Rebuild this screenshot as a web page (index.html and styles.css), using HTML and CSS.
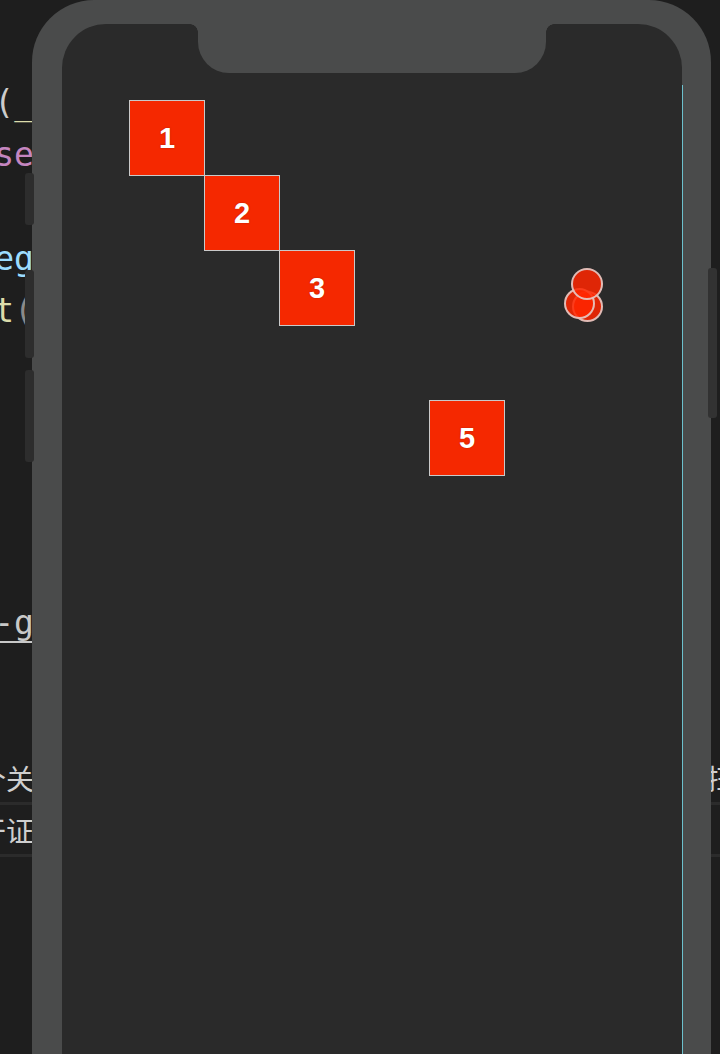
FILE: index.html
```html
<!DOCTYPE html>
<html lang="zh">
<head>
<meta charset="utf-8">
<title>Drag demo</title>
<link rel="stylesheet" href="styles.css">
</head>
<body>
<div class="editor">
  <div class="row"><span class="l"><span class="c-gray">(</span><span class="c-yel">_</span></span><span class="r"></span></div>
  <div class="row"><span class="l"><span class="c-pur">se</span></span><span class="r"></span></div>
  <div class="row"><span class="l"></span><span class="r"></span></div>
  <div class="row"><span class="l"><span class="c-blue">eg</span></span><span class="r"></span></div>
  <div class="row"><span class="l"><span class="c-yel">t</span><span class="c-dim">(</span></span><span class="r"></span></div>
  <div class="row"><span class="l"></span><span class="r"></span></div>
  <div class="row"><span class="l"></span><span class="r"></span></div>
  <div class="row"><span class="l"></span><span class="r"></span></div>
  <div class="row"><span class="l"></span><span class="r"></span></div>
  <div class="row"><span class="l"></span><span class="r"></span></div>
  <div class="row"><span class="l"><span class="c-link">-g</span></span><span class="r"></span></div>
  <div class="row"><span class="l"></span><span class="r"></span></div>
  <div class="row"><span class="l"></span><span class="r"></span></div>
  <div class="row sep"><span class="l cjk">个关</span><span class="r cjk">扫描</span></div>
  <div class="row sep"><span class="l cjk">干证</span><span class="r cjk"></span></div>
  <div class="row"><span class="l"></span><span class="r"></span></div>
</div>

<div class="phone">
  <div class="side-btn left-1"></div>
  <div class="side-btn left-2"></div>
  <div class="side-btn left-3"></div>
  <div class="side-btn right-1"></div>
  <div class="screen">
    <div class="notch"></div>
    <div class="box b1">1</div>
    <div class="box b2">2</div>
    <div class="box b3">3</div>
    <div class="box b5">5</div>
    <div class="dot d3"></div>
    <div class="dot d2"></div>
    <div class="dot d1"></div>
  </div>
</div>
</body>
</html>
```

FILE: styles.css
```css
html, body {
  margin: 0;
  padding: 0;
}
body {
  width: 720px;
  height: 1054px;
  overflow: hidden;
  background: #1e1e1e;
  position: relative;
  font-family: "DejaVu Sans Mono", "Noto Sans CJK SC", monospace;
}

/* ---------- editor behind the phone ---------- */
.editor {
  display: flex;
  flex-direction: column;
  padding-top: 77px;
}
.row {
  height: 52px;
  box-sizing: border-box;
  display: flex;
  justify-content: space-between;
  align-items: center;
  font-size: 33px;
  line-height: 52px;
  color: #c8c8c8;
}
.row.sep {
  border-bottom: 3px solid #2b2b2b;
}
.l {
  width: 34px;
  display: flex;
  justify-content: flex-end;
  white-space: nowrap;
}
.r {
  width: 14px;
  display: flex;
  justify-content: flex-start;
  white-space: nowrap;
}
.cjk {
  font-family: "Noto Sans CJK SC", sans-serif;
  font-size: 28px;
  color: #cfcfcf;
}
.c-gray { color: #cccccc; }
.c-dim { color: #8a8a8a; }
.c-yel { color: #dcdcaa; }
.c-pur { color: #c586c0; }
.c-blue { color: #9cdcfe; }
.c-link {
  color: #c8c8c8;
  text-decoration: underline;
  text-decoration-thickness: 2px;
  text-underline-offset: 7px;
}

/* ---------- phone ---------- */
.phone {
  position: absolute;
  left: 32px;
  top: 0;
  width: 679px;
  height: 1120px;
  box-sizing: border-box;
  padding: 24px 29px 0 30px;
  background: #4a4b4b;
  border-radius: 62px 62px 0 0;
  display: flex;
}
.side-btn {
  position: absolute;
  background: #2d2d2d;
  border-radius: 3px;
}
.left-1 { left: -7px; top: 173px; width: 9px; height: 52px; }
.left-2 { left: -7px; top: 270px; width: 9px; height: 88px; }
.left-3 { left: -7px; top: 370px; width: 9px; height: 92px; }
.right-1 { right: -6px; top: 268px; width: 9px; height: 150px; background: #323232; }

.screen {
  position: relative;
  flex: 1;
  background: #2a2a2a;
  border-radius: 44px 44px 0 0;
}
.screen::after {
  content: "";
  position: absolute;
  right: -1px;
  top: 61px;
  bottom: 0;
  width: 1px;
  background: #6cc0cc;
}
.notch {
  position: absolute;
  left: 136px;
  top: 0;
  width: 348px;
  height: 49px;
  background: #4a4b4b;
  border-radius: 0 0 31px 31px;
}
.notch::before,
.notch::after {
  content: "";
  position: absolute;
  top: 0;
  width: 8px;
  height: 8px;
}
.notch::before {
  left: -8px;
  background: radial-gradient(circle at 0 100%, transparent 7.5px, #4a4b4b 8px);
}
.notch::after {
  right: -8px;
  background: radial-gradient(circle at 100% 100%, transparent 7.5px, #4a4b4b 8px);
}

/* draggable boxes */
.box {
  position: absolute;
  width: 76px;
  height: 76px;
  box-sizing: border-box;
  border: 1.5px solid #c9c9c9;
  background: #f52800;
  color: #ffffff;
  font-family: "Liberation Sans", Arial, sans-serif;
  font-weight: bold;
  font-size: 29px;
  display: flex;
  align-items: center;
  justify-content: center;
  text-shadow: 0 0 2px rgba(0, 0, 0, 0.25);
}
.b1 { left: 67px; top: 76px; }
.b2 { left: 142px; top: 151px; }
.b3 { left: 217px; top: 226px; }
.b5 { left: 367px; top: 376px; }

/* dots */
.dot {
  position: absolute;
  width: 31px;
  height: 31px;
  box-sizing: border-box;
  border-radius: 50%;
  border: 2px solid rgba(225, 225, 225, 0.8);
  background: rgba(255, 38, 0, 0.85);
}
.d1 { left: 509px; top: 244px; width: 32px; height: 32px; }
.d2 { left: 502px; top: 264px; }
.d3 { left: 510px; top: 267px; }
```
